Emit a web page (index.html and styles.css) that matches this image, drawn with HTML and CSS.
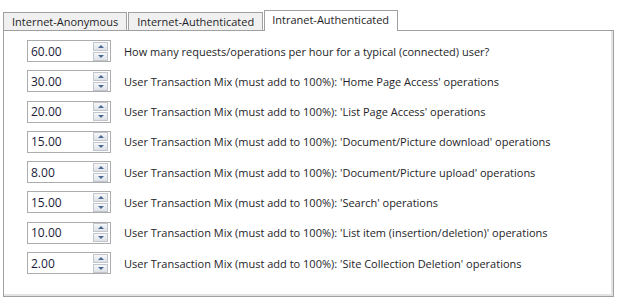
FILE: index.html
```html
<!DOCTYPE html>
<html lang="en">
<head>
  <meta charset="UTF-8">
  <title>Load Settings</title>
  <link rel="stylesheet" href="styles.css">
</head>
<body>
  <div class="tabs">
    <div class="tab">Internet-Anonymous</div>
    <div class="tab">Internet-Authenticated</div>
    <div class="tab active">Intranet-Authenticated</div>
  </div>
  <div class="panel">
    <div class="row">
      <div class="spin"><span class="value">60.00</span><span class="arrows"><span class="up"></span><span class="down"></span></span></div>
      <label>How many requests/operations per hour for a typical (connected) user?</label>
    </div>
    <div class="row">
      <div class="spin"><span class="value">30.00</span><span class="arrows"><span class="up"></span><span class="down"></span></span></div>
      <label>User Transaction Mix (must add to 100%): 'Home Page Access' operations</label>
    </div>
    <div class="row">
      <div class="spin"><span class="value">20.00</span><span class="arrows"><span class="up"></span><span class="down"></span></span></div>
      <label>User Transaction Mix (must add to 100%): 'List Page Access' operations</label>
    </div>
    <div class="row">
      <div class="spin"><span class="value">15.00</span><span class="arrows"><span class="up"></span><span class="down"></span></span></div>
      <label>User Transaction Mix (must add to 100%): 'Document/Picture download' operations</label>
    </div>
    <div class="row">
      <div class="spin"><span class="value">8.00</span><span class="arrows"><span class="up"></span><span class="down"></span></span></div>
      <label>User Transaction Mix (must add to 100%): 'Document/Picture upload' operations</label>
    </div>
    <div class="row">
      <div class="spin"><span class="value">15.00</span><span class="arrows"><span class="up"></span><span class="down"></span></span></div>
      <label>User Transaction Mix (must add to 100%): 'Search' operations</label>
    </div>
    <div class="row">
      <div class="spin"><span class="value">10.00</span><span class="arrows"><span class="up"></span><span class="down"></span></span></div>
      <label>User Transaction Mix (must add to 100%): 'List item (insertion/deletion)' operations</label>
    </div>
    <div class="row">
      <div class="spin"><span class="value">2.00</span><span class="arrows"><span class="up"></span><span class="down"></span></span></div>
      <label>User Transaction Mix (must add to 100%): 'Site Collection Deletion' operations</label>
    </div>
  </div>
</body>
</html>
```
FILE: styles.css
```css
body {
  margin: 0;
  background-color: #fff;
  font-family: 'Open Sans', sans-serif;
  font-size: 11px;
  color: #1e1e28;
}
.tabs {
  display: flex;
  align-items: flex-end;
  padding: 10px 0 0 3px;
}
.tab {
  height: 17px;
  line-height: 17px;
  padding: 0 8px 0 8px;
  border: 1px solid #a0a0a0;
  border-bottom: none;
  background-color: #f0f0f0;
  margin-right: 1px;
  white-space: nowrap;
}
.tab.active {
  height: 20px;
  line-height: 18px;
  padding: 0 8px 0 7px;
  background-color: #fff;
  margin-bottom: -1px;
  margin-left: 0;
  position: relative;
  z-index: 1;
}
.panel {
  margin: 0 10px 0 3px;
  height: 267px;
  border: 1px solid #a0a0a0;
  box-shadow: inset -2px -2px 0 #e3e3e3;
  padding: 9px 0 0 23px;
  box-sizing: border-box;
  display: flex;
  flex-direction: column;
  gap: 8.3px;
}
.row {
  display: flex;
  align-items: center;
  gap: 13px;
  height: 22px;
}
.spin {
  width: 84px;
  height: 22px;
  box-sizing: border-box;
  border: 1px solid #acacac;
  display: flex;
  align-items: center;
  justify-content: space-between;
  padding: 0 2px 0 3px;
  font-size: 12px;
}
.value {
  color: #1c1c3a;
}
.arrows {
  display: flex;
  flex-direction: column;
  gap: 1px;
}
.up, .down {
  width: 13px;
  height: 7px;
  border: 1px solid #c2c6cc;
  background: linear-gradient(#f6f7f9, #dde2e8);
  position: relative;
}
.up::after, .down::after {
  content: "";
  position: absolute;
  left: 4px;
  border-left: 3px solid transparent;
  border-right: 3px solid transparent;
}
.up::after {
  top: 2px;
  border-bottom: 3px solid #4a6a95;
}
.down::after {
  top: 2px;
  border-top: 3px solid #4a6a95;
}
label {
  white-space: nowrap;
}
```
